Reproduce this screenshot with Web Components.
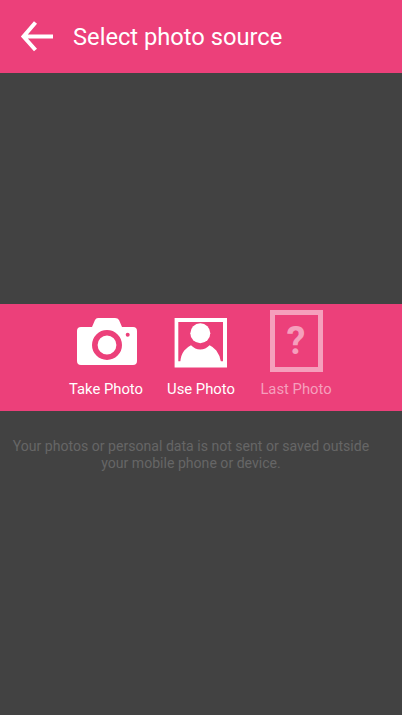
<!DOCTYPE html>
<html>
<head>
<meta charset="utf-8">
<title>Select photo source</title>
<style>
  html, body { margin: 0; height: 100%; background: #424242; }
  body { font-family: Roboto, "Liberation Sans", sans-serif; }
</style>
</head>
<body>
<photo-source-page>
  <app-header>Select photo source</app-header>
  <source-bar>
    <source-item>
      <svg slot="icon" width="62" height="62" viewBox="0 0 62 62">
        <path fill="#fff" d="M23 8h17q3 0 4 2l3 7h11q4 0 4 4v30q0 4-4 4H6q-4 0-4-4V21q0-4 4-4h11l3-7q1-2 3-2z"/>
        <circle cx="32" cy="35" r="12.200" fill="none" stroke="#ec407a" stroke-width="5.600"/>
        <circle cx="52.700" cy="24.700" r="2" fill="#ec407a"/>
      </svg>
      Take Photo
    </source-item>
    <source-item>
      <svg slot="icon" width="53" height="62" viewBox="0.7 0 53 62" overflow="visible">
        <path fill="#fff" fill-rule="evenodd" d="M.3 8h52.400v49.400H.3zM4 12v39.300h44.700V12z"/>
        <circle cx="26" cy="23.300" r="10" fill="#fff"/>
        <path fill="#fff" d="M6 52q.5-7 4-11.500 3-3.500 6.700-5.200 4 4.200 9.300 4.200t9.300-4.200q3.700 1.700 6.700 5.200 3.500 4.500 4.700 11.500z"/>
      </svg>
      Use Photo
    </source-item>
    <source-item disabled>
      <question-icon slot="icon"></question-icon>
      Last Photo
    </source-item>
  </source-bar>
  <privacy-note>Your photos or personal data is not sent or saved outside<br>your mobile phone or device.</privacy-note>
</photo-source-page>

<script>
function shadow(el, html) {
  el.attachShadow({ mode: 'open' }).innerHTML = html;
}

class PhotoSourcePage extends HTMLElement {
  constructor() {
    super();
    shadow(this, `
      <style>
        :host {
          display: flex;
          flex-direction: column;
          height: 715px;
          background: #424242;
          overflow: hidden;
        }
      </style>
      <slot></slot>`);
  }
}

class AppHeader extends HTMLElement {
  constructor() {
    super();
    shadow(this, `
      <style>
        :host {
          display: flex;
          align-items: center;
          gap: 20px;
          flex: none;
          height: 73px;
          padding-left: 20px;
          background: #ec407a;
          color: #fff;
          font-size: 23.700px;
          line-height: 28px;
        }
        svg { display: block; flex: none; }
      </style>
      <svg width="33" height="33" viewBox="0 0 33 33" fill="none" stroke="#fff" stroke-width="4">
        <path d="M15.500 2.500 3.500 16.500l12 13.500M4 16.500H33"/>
      </svg>
      <slot></slot>`);
  }
}

class SourceBar extends HTMLElement {
  constructor() {
    super();
    shadow(this, `
      <style>
        :host {
          display: grid;
          grid-template-columns: repeat(3, 95px);
          justify-content: center;
          flex: none;
          height: 107px;
          margin-top: 231px;
          background: #ec407a;
          box-sizing: border-box;
          padding-top: 6px;
        }
      </style>
      <slot></slot>`);
  }
}

class SourceItem extends HTMLElement {
  constructor() {
    super();
    shadow(this, `
      <style>
        :host {
          display: flex;
          flex-direction: column;
          align-items: center;
          color: #fff;
          font-size: 14.800px;
          line-height: 18px;
          white-space: nowrap;
        }
        :host([disabled]) { color: #f59fbc; }
        .icon { display: flex; height: 62px; margin-bottom: 8px; }
      </style>
      <div class="icon"><slot name="icon"></slot></div>
      <slot></slot>`);
  }
}

class QuestionIcon extends HTMLElement {
  constructor() {
    super();
    shadow(this, `
      <style>
        :host {
          display: flex;
          align-items: center;
          justify-content: center;
          box-sizing: border-box;
          width: 53px;
          height: 62px;
          border: 5px solid #f59fbc;
          color: #f59fbc;
          font: 700 38px/1 Roboto, "Liberation Sans", sans-serif;
        }
      </style>
      ?`);
  }
}

class PrivacyNote extends HTMLElement {
  constructor() {
    super();
    shadow(this, `
      <style>
        :host {
          display: block;
          margin-top: 27px;
          padding-right: 20px;
          text-align: center;
          color: #666;
          font-size: 14.080px;
          line-height: 17px;
          white-space: nowrap;
        }
      </style>
      <slot></slot>`);
  }
}

customElements.define('photo-source-page', PhotoSourcePage);
customElements.define('app-header', AppHeader);
customElements.define('source-bar', SourceBar);
customElements.define('source-item', SourceItem);
customElements.define('question-icon', QuestionIcon);
customElements.define('privacy-note', PrivacyNote);
</script>
</body>
</html>
